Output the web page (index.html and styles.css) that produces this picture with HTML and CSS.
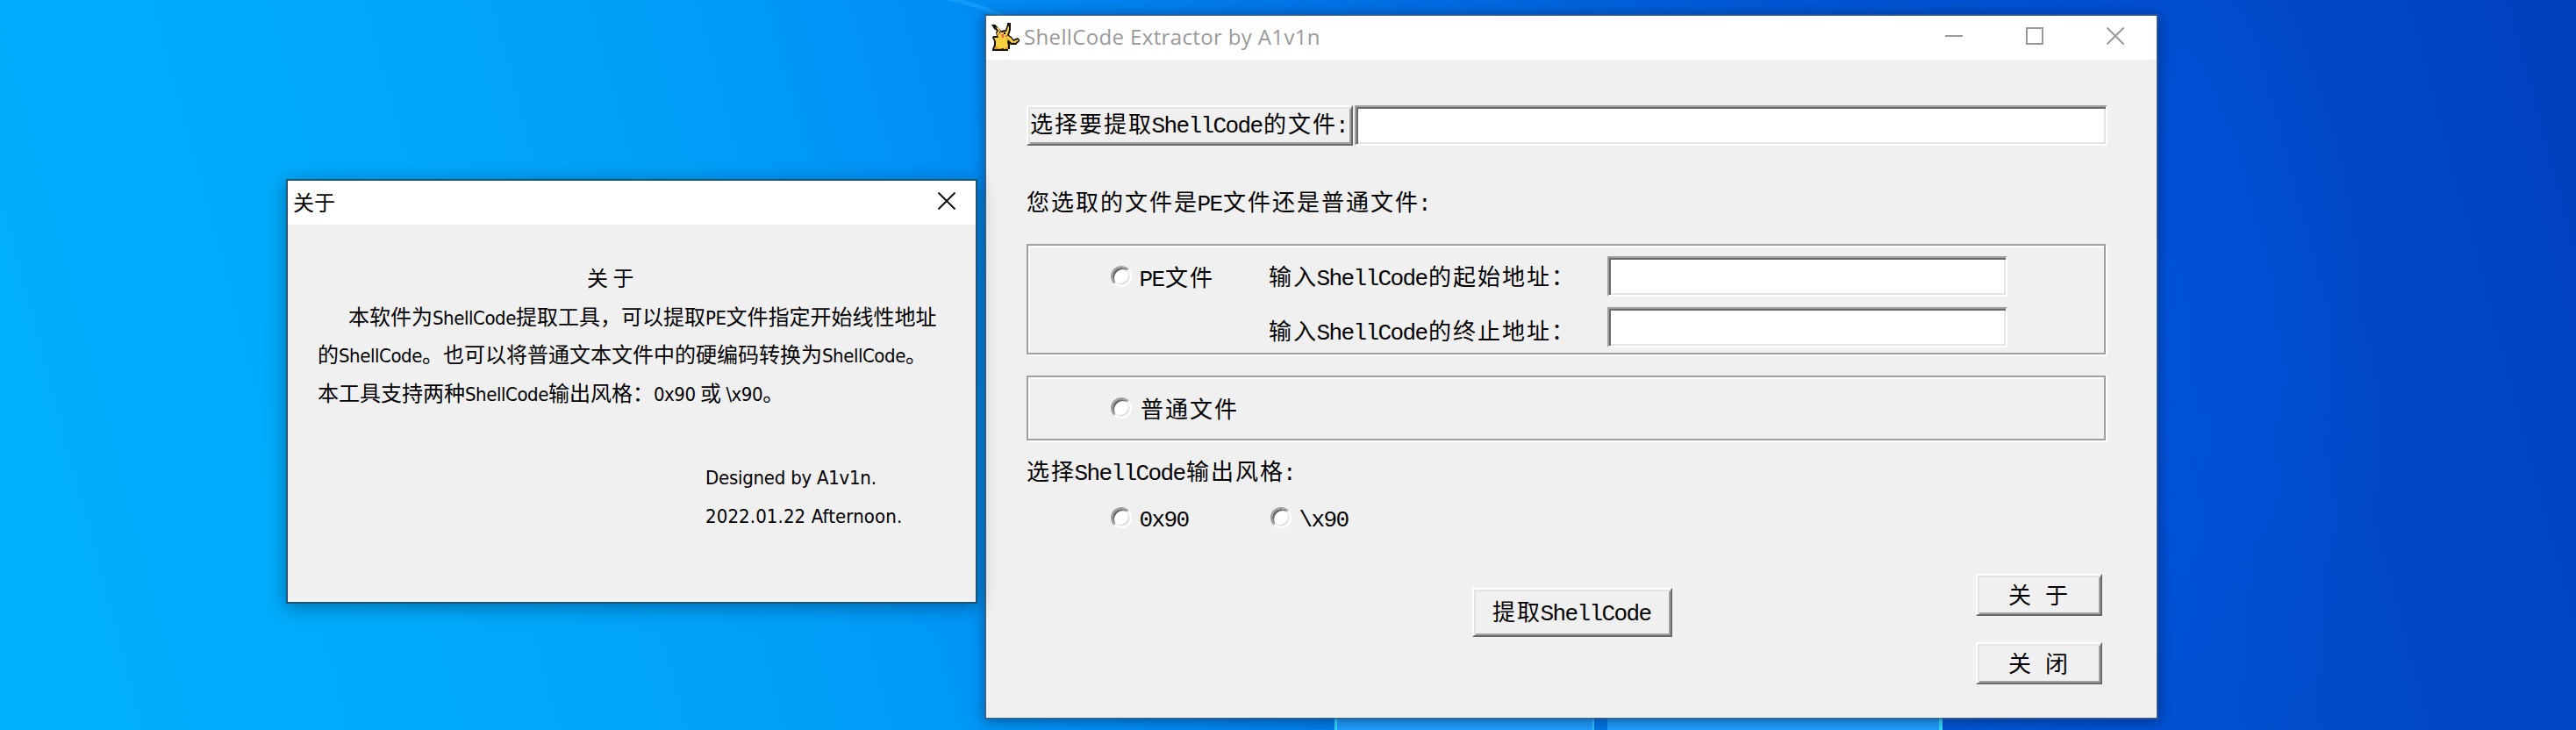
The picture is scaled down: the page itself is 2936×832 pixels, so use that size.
FILE: index.html
```html
<!DOCTYPE html>
<html lang="zh-CN">
<head>
  <meta charset="UTF-8">
  <title>ShellCode Extractor by A1v1n</title>
  <link rel="stylesheet" href="styles.css">
</head>
<body>

  <!-- Wallpaper details -->
  <svg class="light-ray" width="160" height="40" viewBox="0 0 160 40">
    <path d="M0 -6 Q50 2 90 22" />
  </svg>
  <div class="panes">
    <div class="pane pane-left"></div>
    <div class="pane pane-right"></div>
  </div>

  <!-- Main Window -->
  <div class="window main-window">
    <div class="title-bar">
      <svg class="app-icon" width="32" height="32" viewBox="0 0 32 32">
        <path class="outline" d="M0 2H4L11 9L16 8L18 2V0H22V8L20 14L23 16L25 19L30 17L32 19V21L28 25H22V23L21 26V30H19V32H1V30L3 25V21L1 17L2 15H6L5 11L6 9L3 7Z" />
        <path class="fur" d="M5 5L8 6L11 11L17 10L19 4L20 4V8L18 14L19 15L22 17L25 21L30 19L31 20L27 23H23L21 21L19 19L18 22L19 26L18 30H14V29L9 30H3L5 26V21L3 17H8L6 12L8 9Z" />
        <path class="shade" d="M5 27H7V29H11V30H3ZM16 28H19V30H15ZM17 17H19L17 21ZM24 22H28V23H23Z" />
        <path class="eye" d="M9 10H10V12H9ZM14 11H16V13H14ZM1 2H4L7 5H4ZM19 1H21V4H19Z" />
        <path class="cheek" d="M11 13H14V17H12ZM16 14H18V16H16ZM8 12H9V14H8Z" />
      </svg>
      <span class="title">ShellCode Extractor by A1v1n</span>
      <div class="window-buttons">
        <svg width="20" height="20" viewBox="0 0 20 20"><path d="M0 10H20" /></svg>
        <svg width="20" height="20" viewBox="0 0 20 20"><path d="M1 1H19V19H1Z" /></svg>
        <svg width="20" height="20" viewBox="0 0 20 20"><path d="M.5 .5L19.5 19.5M19.5 .5L.5 19.5" /></svg>
      </div>
    </div>

    <div class="main-content">
      <div class="file-row">
        <button class="btn btn-file">选择要提取<span class="en">ShellCode</span>的文件<span class="en colon">:</span></button>
        <input class="field" type="text">
      </div>

      <div class="text type-label">您选取的文件是<span class="en">PE</span>文件还是普通文件<span class="en colon">:</span></div>

      <div class="group group-pe">
        <label class="option"><i class="radio"></i><span class="text"><span class="en">PE</span>文件</span></label>
        <span class="text start-label">输入<span class="en">ShellCode</span>的起始地址：</span>
        <input class="field" type="text">
        <span class="text end-label">输入<span class="en">ShellCode</span>的终止地址：</span>
        <input class="field" type="text">
      </div>

      <div class="group group-plain">
        <label class="option"><i class="radio"></i><span class="text">普通文件</span></label>
      </div>

      <div class="text style-label">选择<span class="en">ShellCode</span>输出风格<span class="en colon">:</span></div>
      <div class="style-row">
        <label class="option"><i class="radio"></i><span class="text"><span class="en">0x90</span></span></label>
        <label class="option"><i class="radio"></i><span class="text"><span class="en">\x90</span></span></label>
      </div>

      <div class="actions">
        <button class="btn btn-extract">提取<span class="en">ShellCode</span></button>
        <div class="side-buttons">
          <button class="btn">关<span class="en">&nbsp;</span>于</button>
          <button class="btn">关<span class="en">&nbsp;</span>闭</button>
        </div>
      </div>
    </div>
  </div>

  <!-- About Dialog -->
  <div class="window about-window">
    <div class="title-bar">
      <span class="title">关于</span>
      <div class="window-buttons">
        <svg width="20" height="20" viewBox="0 0 20 20"><path d="M.5 .5L19.5 19.5M19.5 .5L.5 19.5" /></svg>
      </div>
    </div>
    <div class="about-content">
      <div class="about-heading">关 于</div>
      <div class="about-line first">本软件为<span class="tahoma">ShellCode</span>提取工具，可以提取<span class="tahoma">PE</span>文件指定开始线性地址</div>
      <div class="about-line">的<span class="tahoma">ShellCode</span>。也可以将普通文本文件中的硬编码转换为<span class="tahoma">ShellCode</span>。</div>
      <div class="about-line">本工具支持两种<span class="tahoma">ShellCode</span>输出风格：<span class="tahoma">0x90</span> 或 <span class="tahoma">\x90</span>。</div>
      <div class="signature">
        <div class="about-line"><span class="tahoma author">Designed by A1v1n.</span></div>
        <div class="about-line"><span class="tahoma date">2022.01.22 Afternoon.</span></div>
      </div>
    </div>
  </div>

</body>
</html>
```

FILE: styles.css
```css
body {
  margin: 0;
  width: 2936px;
  height: 832px;
  position: relative;
  overflow: hidden;
  font-family: "Noto Sans CJK SC", sans-serif;
  color: #000;
  background:
    radial-gradient(ellipse 320px 600px at 2420px 380px, rgba(0, 92, 240, 0.45), rgba(0, 92, 240, 0) 100%),
    linear-gradient(75deg, #00b0fd 0%, #00aafb 16%, #009ff8 30%, #0090f5 40%, #0074e6 54%, #0058d4 70%, #004bca 84%, #0040bc 100%);
}

/* Wallpaper */
.light-ray {
  position: absolute;
  left: 1060px;
  top: 0;
}
.light-ray path {
  fill: none;
  stroke: #1aa4ff;
  stroke-width: 5;
  opacity: 0.6;
}
.panes {
  position: absolute;
  left: 1521px;
  bottom: 0;
  height: 14px;
  display: flex;
  gap: 15px;
  background: #0078e8;
}
.pane {
  box-sizing: border-box;
  height: 14px;
  background: #20a0ff;
}
.pane-left {
  width: 296px;
  border-left: 3px solid #2ce0ff;
  border-right: 2px solid #2cc8ff;
}
.pane-right {
  width: 382px;
  border-right: 4px solid #38dcff;
}

/* Windows */
.window {
  position: absolute;
  background: #f0f0f0;
}
.main-window {
  left: 1122px;
  top: 16px;
  width: 1334px;
  height: 800px;
  border: 2px solid rgba(60, 90, 120, 0.7);
  background-clip: padding-box;
  box-shadow: 0 2px 14px rgba(0, 10, 50, 0.45);
}
.about-window {
  left: 326px;
  top: 204px;
  width: 784px;
  height: 480px;
  border: 2px solid #1c5573;
  box-shadow: 0 4px 20px rgba(0, 20, 50, 0.4);
}
.title-bar {
  height: 50px;
  background: #fff;
  display: flex;
  align-items: center;
}
.title {
  font-size: 24px;
  line-height: 50px;
  white-space: nowrap;
}
.window-buttons {
  margin-left: auto;
  display: flex;
  gap: 72px;
}
.window-buttons svg {
  display: block;
  fill: none;
  stroke: #999;
  stroke-width: 2;
}
.main-window .title {
  font-family: "Open Sans", sans-serif;
  color: #999;
  letter-spacing: 0.36px;
  line-height: 48px;
  margin: 0 0 2px 5px;
}
.main-window .window-buttons {
  margin-right: 37px;
  margin-bottom: 4px;
}
.about-window .title {
  margin: 0 0 2px 6px;
}
.about-window .window-buttons {
  margin-right: 23px;
  margin-bottom: 4px;
}
.about-window .window-buttons svg {
  stroke: #111;
}

/* Icon */
.app-icon {
  margin-left: 6px;
  margin-bottom: 2px;
}
.app-icon .outline,
.app-icon .eye { fill: #14100a; }
.app-icon .fur { fill: #fbd040; }
.app-icon .shade { fill: #d99a35; }
.app-icon .cheek { fill: #e8604a; }

/* Form */
.main-content {
  padding: 52px 56px 0 46px;
  font-size: 26px;
  line-height: 28px;
  letter-spacing: 2px;
  white-space: nowrap;
}
.text {
  height: 28px;
}
.en {
  font-family: "Liberation Mono", monospace;
  letter-spacing: -1.6px;
  line-height: 0;
  margin: 0 1.5px 0 -1.5px;
}
.colon {
  margin: 0 2px 0 -2px;
}
.btn {
  box-sizing: border-box;
  margin: 0;
  padding: 0 0 2px;
  font: inherit;
  letter-spacing: inherit;
  color: #000;
  background: #f0f0f0;
  border: 2px solid;
  border-color: #fff #696969 #696969 #fff;
  box-shadow: inset 2px 2px #e3e3e3, inset -2px -2px #a0a0a0;
}
.field {
  box-sizing: border-box;
  height: 46px;
  padding: 4px;
  background: #fff;
  border: 2px solid;
  border-color: #a0a0a0 #fff #fff #a0a0a0;
  box-shadow: inset 2px 2px #696969, inset -2px -2px #e3e3e3;
}
.file-row {
  display: flex;
  gap: 2px;
}
.btn-file {
  width: 372px;
  padding: 0 0 6px;
}
.file-row .field {
  flex: 1;
}
.type-label {
  margin-top: 49px;
}
.group {
  box-sizing: border-box;
  width: 1230px;
  padding-left: 94px;
  border: 2px solid #a0a0a0;
  box-shadow: 2px 2px #fff, inset 2px 2px #fff;
}
.group-pe {
  height: 126px;
  margin-top: 35px;
  padding-top: 12px;
  display: grid;
  grid-template-columns: 180px 386px 456px;
  grid-auto-rows: 46px;
  row-gap: 12px;
  align-items: center;
}
.start-label {
  padding-bottom: 3px;
}
.end-label {
  grid-column: 2;
  padding-top: 5px;
}
.group-plain {
  height: 74px;
  margin-top: 24px;
  display: flex;
  align-items: center;
}
.option {
  display: flex;
  align-items: center;
  gap: 10px;
}
.radio {
  box-sizing: border-box;
  width: 24px;
  height: 24px;
  background: #fff;
  border: 2px solid;
  border-color: #a0a0a0 #fff #fff #a0a0a0;
  border-radius: 50%;
  box-shadow: inset 2px 2px #696969, inset -2px -2px #e3e3e3;
}
.style-label {
  margin-top: 20px;
}
.style-row {
  margin-top: 25px;
  padding-left: 96px;
  display: flex;
}
.style-row .option {
  width: 182px;
}
.style-row .text {
  margin-bottom: 2px;
}
.actions {
  margin-top: 49px;
  display: flex;
  align-items: flex-start;
}
.btn-extract {
  width: 228px;
  height: 56px;
  margin: 16px 0 0 508px;
  padding-bottom: 4px;
}
.side-buttons {
  margin-left: auto;
  margin-right: 6px;
  display: flex;
  flex-direction: column;
  gap: 30px;
}
.side-buttons .btn {
  width: 144px;
  height: 48px;
}

/* About */
.about-content {
  padding-left: 34px;
  font-size: 24px;
  line-height: 43.5px;
  white-space: nowrap;
}
.tahoma {
  font-family: "DejaVu Sans Condensed", "DejaVu Sans", sans-serif;
  font-stretch: condensed;
  font-size: 22px;
  line-height: 0;
  letter-spacing: -0.45px;
}
.about-heading {
  height: 43.5px;
  padding-top: 38px;
  padding-left: 307px;
}
.about-line {
  height: 43.5px;
}
.about-line.first {
  padding-left: 35px;
}
.signature {
  margin-top: 52px;
  padding-left: 442px;
}
.author {
  letter-spacing: -0.25px;
}
.date {
  letter-spacing: 0.1px;
}
```
